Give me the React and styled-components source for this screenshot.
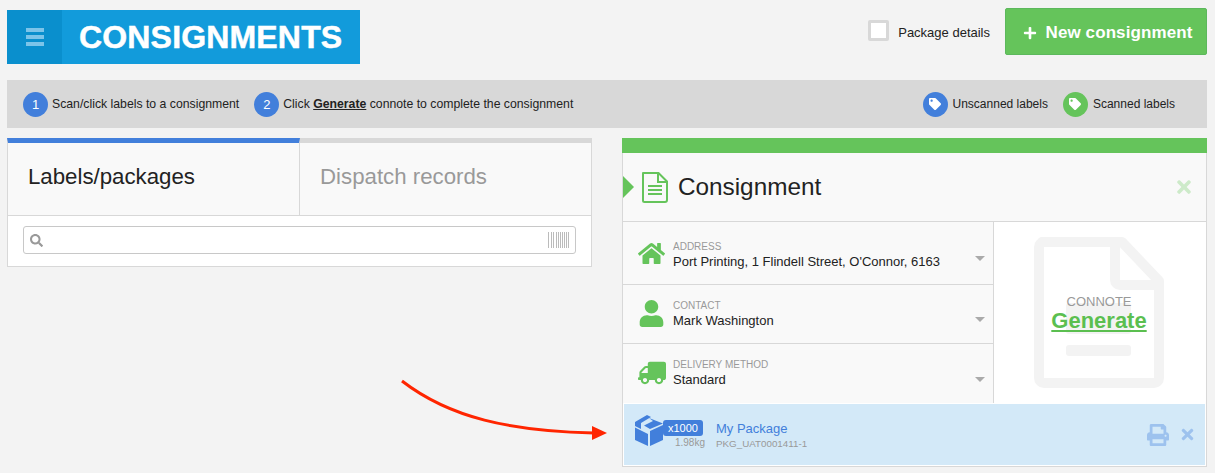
import React from 'react';
import styled, { createGlobalStyle } from 'styled-components';
import { FaHome, FaUser, FaTruck, FaPrint, FaTimes, FaTag, FaPlus, FaSearch } from 'react-icons/fa';

const GlobalStyle = createGlobalStyle`
  html, body {
    margin: 0;
    padding: 0;
    background: #f3f3f3;
    font-family: "Liberation Sans", Arial, sans-serif;
    color: #222;
  }
  * { box-sizing: border-box; }
`;

const Page = styled.div`
  position: relative;
  width: 1215px;
  height: 473px;
  overflow: hidden;
  padding: 8px 8px 0 7px;
`;

const Header = styled.header`
  display: flex;
  justify-content: space-between;
  align-items: flex-start;
  height: 56px;
`;

const TitleBlock = styled.div`
  display: flex;
  width: 353px;
  height: 54px;
  margin-top: 2px;
  background: #129bdb;
`;

const MenuCell = styled.div`
  width: 55px;
  display: flex;
  flex-direction: column;
  justify-content: center;
  align-items: center;
  gap: 3px;
  background: #0a8fcd;
`;

const MenuBar = styled.span`
  width: 18px;
  height: 4px;
  background: #7cc4e9;
`;

const Title = styled.h1`
  margin: 0 0 0 17px;
  font-size: 32px;
  line-height: 54px;
  font-weight: 700;
  letter-spacing: 0.17px;
  -webkit-text-stroke: 0.5px #fff;
  color: #fff;
`;

const Actions = styled.div`
  display: flex;
  align-items: center;
`;

const Check = styled.span`
  width: 21px;
  height: 21px;
  border: 3px solid #d8d8d8;
  border-radius: 2px;
  background: #fff;
  margin-right: 9px;
  margin-top: -2px;
`;

const CheckLabel = styled.span`
  font-size: 13px;
  margin-right: 15px;
  margin-top: 1px;
`;

const NewButton = styled.button`
  width: 202px;
  height: 47px;
  display: flex;
  align-items: center;
  justify-content: center;
  gap: 9px;
  padding: 2px 0 0 3px;
  border: 1px solid #5cb85c;
  border-radius: 2px;
  background: #65c45b;
  color: #fff;
  font: 700 17px "Liberation Sans", Arial, sans-serif;
  letter-spacing: 0.1px;
`;

const InfoBar = styled.div`
  display: flex;
  align-items: center;
  height: 48px;
  margin-top: 16px;
  padding: 0 32px 0 16px;
  background: #d8d8d8;
  font-size: 12.25px;
`;

const Hint = styled.div`
  display: flex;
  align-items: center;
  gap: 4px;
  margin-right: ${({ $gap }) => $gap || 0}px;
`;

const LegendItem = styled(Hint)`
  gap: 5px;
  font-size: 12px;
`;

const Spacer = styled.div`
  flex: 1;
`;

const Dot = styled.span`
  width: 25px;
  height: 25px;
  border-radius: 50%;
  display: flex;
  align-items: center;
  justify-content: center;
  background: ${({ $color }) => $color};
  color: #fff;
  font-size: 13px;
`;

const GenerateWord = styled.b`
  text-decoration: underline;
`;

const Columns = styled.main`
  display: grid;
  grid-template-columns: 585px 585px;
  column-gap: 30px;
  margin-top: 10px;
`;

const Panel = styled.section`
  background: #fff;
  border: 1px solid #d8d8d8;
  border-top: 0;
`;

const LeftPanel = styled(Panel)`
  align-self: start;
`;

const Tabs = styled.div`
  display: grid;
  grid-template-columns: 293px 1fr;
  margin: 0 -1px;
  height: 78px;
`;

const Tab = styled.div`
  border-top: 5px solid ${({ $active }) => ($active ? '#427fdb' : '#d8d8d8')};
  border-bottom: 1px solid #d8d8d8;
  border-left: ${({ $active }) => ($active ? '1px solid #d8d8d8' : '0')};
  border-right: 1px solid #d8d8d8;
  background: #f9f9f9;
  padding-left: 20px;
  font-size: 22.25px;
  line-height: 67px;
  color: ${({ $active }) => ($active ? '#222' : '#999')};
`;

const SearchWrap = styled.div`
  padding: 10px 15px 12px;
`;

const SearchBox = styled.div`
  height: 28px;
  display: flex;
  align-items: center;
  justify-content: space-between;
  padding: 0 6px;
  border: 1px solid #c8c8c8;
  border-radius: 3px;
  color: #999;
`;

const GreenBar = styled.div`
  height: 15px;
  margin: 0 -1px;
  background: #65c45b;
`;

const PanelHead = styled.div`
  position: relative;
  height: 69px;
  display: flex;
  align-items: center;
  padding-left: 19px;
  background: #f9f9f9;
  border-bottom: 1px solid #d8d8d8;
`;

const Pointer = styled.span`
  position: absolute;
  left: 0;
  top: 23px;
  border-left: 11px solid #65c45b;
  border-top: 11px solid transparent;
  border-bottom: 11px solid transparent;
`;

const PanelTitle = styled.h2`
  margin: 0 0 0 10px;
  font-size: 24.3px;
  font-weight: 400;
`;

const CloseMark = styled.span`
  position: absolute;
  right: 12px;
  top: 24px;
  display: flex;
  color: #cdeac9;
`;

const Body = styled.div`
  display: grid;
  grid-template-columns: 371px 1fr;
  height: 181px;
  border-bottom: 1px solid #d8d8d8;
`;

const Rows = styled.div`
  display: grid;
  grid-template-rows: 63px 59px 59px;
  border-right: 1px solid #d8d8d8;
`;

const Row = styled.div`
  position: relative;
  display: flex;
  align-items: center;
  padding-top: ${({ $top }) => $top || 0}px;
  background: #f9f9f9;
  border-bottom: ${({ $last }) => ($last ? '0' : '1px solid #d8d8d8')};
`;

const RowIcon = styled.div`
  width: 50px;
  display: flex;
  justify-content: center;
  padding-left: 7px;
  margin-top: ${({ $shift }) => $shift || 0}px;
  color: #65c45b;
`;

const RowText = styled.div`
  flex: 1;
`;

const RowLabel = styled.div`
  font-size: 10px;
  line-height: 12px;
  color: #999;
`;

const RowValue = styled.div`
  font-size: 13px;
  line-height: 17px;
`;

const Caret = styled.span`
  position: absolute;
  right: 8px;
  top: 50%;
  margin-top: 3px;
  border-top: 5px solid #aaa;
  border-left: 5px solid transparent;
  border-right: 5px solid transparent;
`;

const LeftTruck = styled(FaTruck)`
  transform: scaleX(-1);
`;

const GenerateCell = styled.div`
  position: relative;
  display: flex;
  justify-content: center;
  padding: 15px 2px 0 0;
  background: #fff;
`;

const GenerateText = styled.div`
  position: absolute;
  left: 0;
  right: 2px;
  top: 72px;
  text-align: center;
`;

const ConnoteLabel = styled.div`
  font-size: 13px;
  line-height: 15px;
  color: #999;
`;

const GenerateLink = styled.div`
  font-size: 22px;
  line-height: 24px;
  font-weight: 700;
  color: #5bbf50;
  text-decoration: underline;
`;

const PackageRow = styled.div`
  display: flex;
  align-items: center;
  height: 61px;
  margin: 1px;
  background: #d3e9f8;
`;

const PackageIcon = styled.div`
  position: relative;
  width: 81px;
  height: 40px;
  margin-left: 11px;
`;

const Badge = styled.span`
  position: absolute;
  left: 28px;
  top: 5px;
  width: 40px;
  height: 16px;
  border-radius: 3px;
  background: #427fdb;
  color: #fff;
  font-size: 11px;
  line-height: 16px;
  text-align: center;
`;

const Weight = styled.span`
  position: absolute;
  right: 11px;
  top: 22px;
  font-size: 10px;
  color: #999;
`;

const PackageText = styled.div`
  flex: 1;
  margin-top: 1px;
`;

const PackageName = styled.div`
  font-size: 13px;
  line-height: 16px;
  color: #427fdb;
`;

const PackageCode = styled.div`
  font-size: 9.8px;
  line-height: 13px;
  color: #999;
`;

const PackageTools = styled.div`
  display: flex;
  align-items: center;
  gap: 10px;
  margin-right: 9px;
  color: #9dc2ee;
`;

const ArrowLayer = styled.svg`
  position: absolute;
  left: 0;
  top: 0;
  pointer-events: none;
`;

const DocIcon = () => (
  <svg width="26" height="31" viewBox="0 0 26 31" fill="none" stroke="#65c45b" strokeWidth="2">
    <path d="M2.500 1h14l8.500 8.500v18.500a2 2 0 0 1-2 2h-20.500a1.500 1.500 0 0 1-1.500-1.500v-27a1.500 1.500 0 0 1 1.500-1.500z" />
    <path d="M16 1v9h9" />
    <path d="M6 14h14M6 18h14M6 22h14" />
  </svg>
);

const BigDocIcon = () => (
  <svg width="130" height="151" viewBox="0 0 130 151" fill="none">
    <path
      d="M8 5H88L125 44V141a5 5 0 0 1-5 5H10a5 5 0 0 1-5-5V10a5 5 0 0 1 5-5z"
      stroke="#f3f3f3"
      strokeWidth="10"
      strokeLinejoin="round"
    />
    <path d="M81 5v38a5 5 0 0 0 5 5h39" stroke="#f3f3f3" strokeWidth="10" />
    <rect x="32" y="66" width="65" height="31" rx="3" fill="#f3f3f3" />
    <rect x="32" y="108" width="65" height="11" rx="3" fill="#f3f3f3" />
  </svg>
);

const BarcodeIcon = () => (
  <svg width="21" height="16" viewBox="0 0 21 16" fill="#bbb">
    {[0, 3, 5, 8, 10, 12, 14, 16, 18, 20].map((x) => (
      <rect key={x} x={x} y="0" width="1" height="16" />
    ))}
  </svg>
);

const BoxIcon = () => (
  <svg width="28" height="31" viewBox="0 0 28 31" fill="#427fdb">
    <path d="M0 7L12 0l4 2L6 8v6l-6-3z" />
    <path d="M14 3l14 5.500L15 14 9 10.500l9-4.500z" />
    <path d="M0 12.500l13 6.500v12L0 25z" />
    <path d="M15 16l13-6v15l-13 6z" />
  </svg>
);

const rows = [
  { label: 'ADDRESS', value: "Port Printing, 1 Flindell Street, O'Connor, 6163", icon: <FaHome size={27} />, top: 4, shift: -4 },
  { label: 'CONTACT', value: 'Mark Washington', icon: <FaUser size={27} />, shift: -2 },
  { label: 'DELIVERY METHOD', value: 'Standard', icon: <LeftTruck size={28} />, shift: -2, last: true },
];

export default function App() {
  return (
    <Page>
      <GlobalStyle />
      <Header>
        <TitleBlock>
          <MenuCell>
            <MenuBar />
            <MenuBar />
            <MenuBar />
          </MenuCell>
          <Title>CONSIGNMENTS</Title>
        </TitleBlock>
        <Actions>
          <Check />
          <CheckLabel>Package details</CheckLabel>
          <NewButton>
            <FaPlus size={14} />
            New consignment
          </NewButton>
        </Actions>
      </Header>

      <InfoBar>
        <Hint $gap={15}>
          <Dot $color="#427fdb">1</Dot>
          Scan/click labels to a consignment
        </Hint>
        <Hint>
          <Dot $color="#427fdb">2</Dot>
          <span>
            Click <GenerateWord>Generate</GenerateWord> connote to complete the consignment
          </span>
        </Hint>
        <Spacer />
        <LegendItem $gap={15}>
          <Dot $color="#427fdb">
            <FaTag size={12} />
          </Dot>
          Unscanned labels
        </LegendItem>
        <LegendItem>
          <Dot $color="#65c45b">
            <FaTag size={12} />
          </Dot>
          Scanned labels
        </LegendItem>
      </InfoBar>

      <Columns>
        <LeftPanel>
          <Tabs>
            <Tab $active>Labels/packages</Tab>
            <Tab>Dispatch records</Tab>
          </Tabs>
          <SearchWrap>
            <SearchBox>
              <FaSearch size={13} />
              <BarcodeIcon />
            </SearchBox>
          </SearchWrap>
        </LeftPanel>
        <Panel>
          <GreenBar />
          <PanelHead>
            <Pointer />
            <DocIcon />
            <PanelTitle>Consignment</PanelTitle>
            <CloseMark>
              <FaTimes size={20} />
            </CloseMark>
          </PanelHead>
          <Body>
            <Rows>
              {rows.map((row) => (
                <Row key={row.label} $last={row.last} $top={row.top}>
                  <RowIcon $shift={row.shift}>{row.icon}</RowIcon>
                  <RowText>
                    <RowLabel>{row.label}</RowLabel>
                    <RowValue>{row.value}</RowValue>
                  </RowText>
                  <Caret />
                </Row>
              ))}
            </Rows>
            <GenerateCell>
              <BigDocIcon />
              <GenerateText>
                <ConnoteLabel>CONNOTE</ConnoteLabel>
                <GenerateLink>Generate</GenerateLink>
              </GenerateText>
            </GenerateCell>
          </Body>
          <PackageRow>
            <PackageIcon>
              <BoxIcon />
              <Badge>x1000</Badge>
              <Weight>1.98kg</Weight>
            </PackageIcon>
            <PackageText>
              <PackageName>My Package</PackageName>
              <PackageCode>PKG_UAT0001411-1</PackageCode>
            </PackageText>
            <PackageTools>
              <FaPrint size={22} />
              <FaTimes size={17} />
            </PackageTools>
          </PackageRow>
        </Panel>
      </Columns>

      <ArrowLayer width="1215" height="473" viewBox="0 0 1215 473">
        <path d="M402 381C450 418 510 431 594 433" fill="none" stroke="#ff2500" strokeWidth="3" />
        <path d="M592 426L607 433L592 440z" fill="#ff2500" />
      </ArrowLayer>
    </Page>
  );
}
